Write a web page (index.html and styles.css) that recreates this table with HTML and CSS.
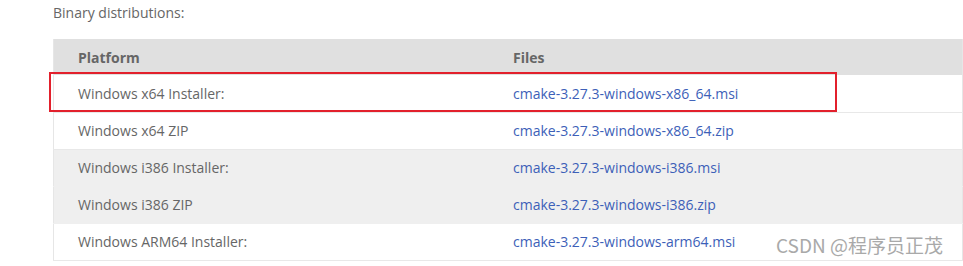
FILE: index.html
```html
<!DOCTYPE html>
<html>
<head>
<meta charset="utf-8">
<link rel="stylesheet" href="styles.css">
</head>
<body>
<div class="page">
  <p class="intro">Binary distributions:</p>
  <table class="dist">
    <thead>
      <tr><th class="c1">Platform</th><th>Files</th></tr>
    </thead>
    <tbody>
      <tr><td class="c1">Windows x64 Installer:</td><td><a href="#">cmake-3.27.3-windows-x86_64.msi</a></td></tr>
      <tr><td class="c1">Windows x64 ZIP</td><td><a href="#">cmake-3.27.3-windows-x86_64.zip</a></td></tr>
      <tr class="alt"><td class="c1">Windows i386 Installer:</td><td><a href="#">cmake-3.27.3-windows-i386.msi</a></td></tr>
      <tr class="alt"><td class="c1">Windows i386 ZIP</td><td><a href="#">cmake-3.27.3-windows-i386.zip</a></td></tr>
      <tr><td class="c1">Windows ARM64 Installer:</td><td><a href="#">cmake-3.27.3-windows-arm64.msi</a></td></tr>
    </tbody>
  </table>
  <div class="highlight"></div>
  <div class="watermark">CSDN @程序员正茂</div>
</div>
</body>
</html>
```
FILE: styles.css
```css
html, body {
  margin: 0;
  padding: 0;
  background: #fff;
  overflow: hidden;
}
.page {
  position: relative;
  width: 963px;
  height: 266px;
  font-family: "Open Sans", "Liberation Sans", sans-serif;
  font-size: 14px;
  color: #666;
}
.intro {
  margin: 0;
  padding: 3px 0 0 53px;
  height: 39px;
  line-height: 19px;
  box-sizing: border-box;
  color: #666;
}
.dist {
  margin-left: 53px;
  width: 910px;
  border-collapse: collapse;
  border-left: 1px solid #e6e6e6;
  border-right: 1px solid #e6e6e6;
  table-layout: fixed;
}
.dist th, .dist td {
  text-align: left;
  padding: 0 0 0 24px;
  vertical-align: middle;
}
.dist .c1 {
  width: 411px;
}
.dist thead tr {
  background: #e0e0e0;
  height: 36px;
}
.dist th {
  font-weight: 700;
  color: #666;
  padding-top: 1px;
}
.dist tbody tr {
  height: 37px;
  border-bottom: 1px solid #e8e8e8;
  background: #fff;
}
.dist tbody tr.alt {
  background: #efefef;
  border-bottom-color: #efefef;
}
.dist a {
  color: #3d5fb8;
  text-decoration: none;
}
.highlight {
  position: absolute;
  left: 49px;
  top: 72px;
  width: 784px;
  height: 36px;
  border: 2px solid #e2202c;
}
.watermark {
  position: absolute;
  left: 776px;
  top: 231px;
  font-family: "Noto Sans CJK SC", "Noto Sans", sans-serif;
  font-size: 19px;
  color: #a9a9a9;
}
```
